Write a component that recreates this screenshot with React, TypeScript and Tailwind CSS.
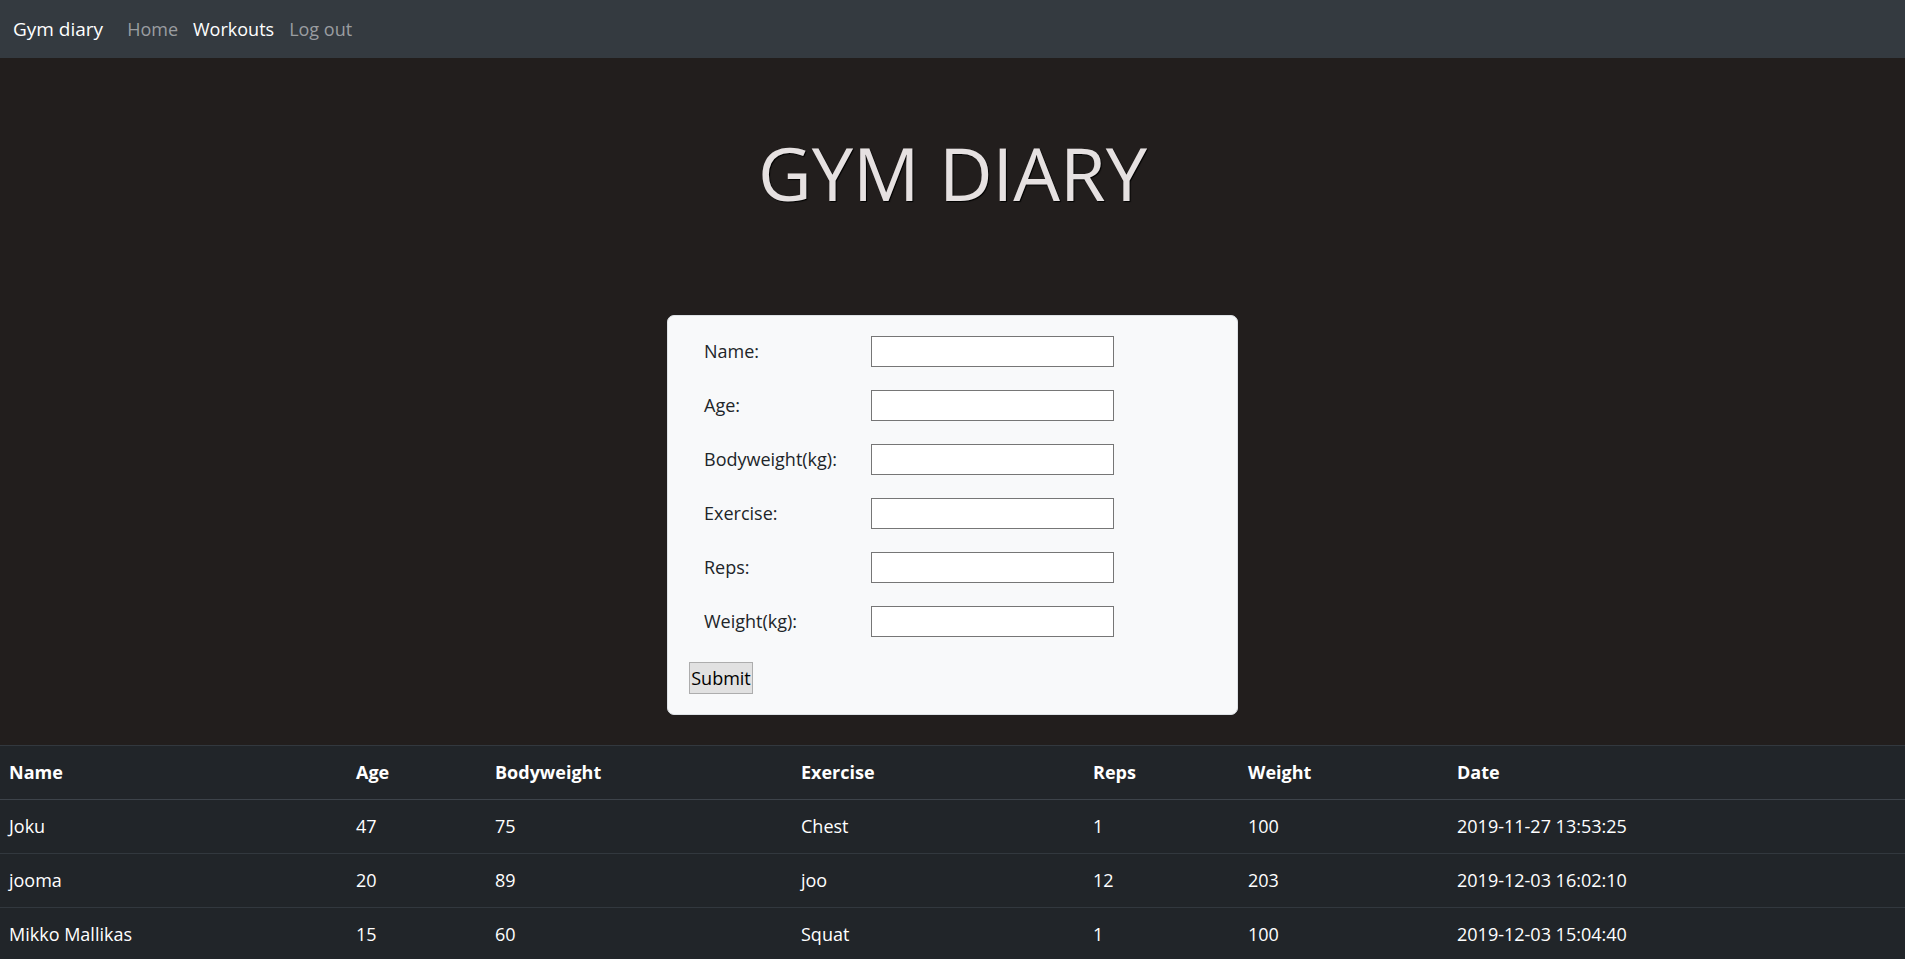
import {useState} from "react";

type Workout = {
    name: string;
    age: number;
    bodyweight: number;
    exercise: string;
    reps: number;
    weight: number;
    date: string;
};

const workouts: Workout[] = [
    {name: "Joku", age: 47, bodyweight: 75, exercise: "Chest", reps: 1, weight: 100, date: "2019-11-27 13:53:25"},
    {name: "jooma", age: 20, bodyweight: 89, exercise: "joo", reps: 12, weight: 203, date: "2019-12-03 16:02:10"},
    {name: "Mikko Mallikas", age: 15, bodyweight: 60, exercise: "Squat", reps: 1, weight: 100, date: "2019-12-03 15:04:40"},
    {name: "Testi", age: 30, bodyweight: 80, exercise: "Deadlift", reps: 5, weight: 140, date: "2019-12-04 10:12:33"},
];

const fields = ["Name:", "Age:", "Bodyweight(kg):", "Exercise:", "Reps:", "Weight(kg):"];

const font = "font-['Open_Sans','Noto_Sans',sans-serif]";

const Navbar = () => (
    <nav className="h-[58px] bg-[#343a40] flex items-center px-[13px]">
        <span className="text-white text-[19px] mr-[24px]">Gym diary</span>
        <a className="text-[#9a9da0] text-[18px] mr-[15px]">Home</a>
        <a className="text-white text-[18px] mr-[15px]">Workouts</a>
        <a className="text-[#9a9da0] text-[18px]">Log out</a>
    </nav>
);

const WorkoutForm = () => {
    const [values, setValues] = useState<string[]>(fields.map(() => ""));

    return (
        <div className="w-[571px] mx-auto bg-[#f8f9fa] border border-[#dee2e6] rounded-[7px] pt-[20px] pb-[20px] px-[21px]">
            <div className="flex flex-col gap-[23px] pl-[15px]">
                {fields.map((label, i) => (
                    <div key={label} className="flex items-center">
                        <label className="w-[167px] text-[18px] text-[#212529]">{label}</label>
                        <input
                            value={values[i]}
                            onChange={e => setValues(v => v.map((x, j) => (j === i ? e.target.value : x)))}
                            className="w-[243px] h-[31px] bg-white border border-[#767676] outline-none px-1"
                        />
                    </div>
                ))}
            </div>
            <button className="mt-[25px] w-[64px] h-[32px] bg-[#e1e1e1] border border-[#adadad] text-[18px] text-black leading-none">
                Submit
            </button>
        </div>
    );
};

const WorkoutTable = () => (
    <table className="w-full mt-[30px] bg-[#212529] text-white text-[18px] border-collapse">
        <thead>
        <tr className="h-[54px] border-t border-[#32383e] border-b border-b-[#3d434a]">
            <th className="w-[347px] pl-[9px] text-left font-bold">Name</th>
            <th className="w-[139px] pl-[9px] text-left font-bold">Age</th>
            <th className="w-[306px] pl-[9px] text-left font-bold">Bodyweight</th>
            <th className="w-[292px] pl-[9px] text-left font-bold">Exercise</th>
            <th className="w-[155px] pl-[9px] text-left font-bold">Reps</th>
            <th className="w-[209px] pl-[9px] text-left font-bold">Weight</th>
            <th className="pl-[9px] text-left font-bold">Date</th>
        </tr>
        </thead>
        <tbody>
        {workouts.map(w => (
            <tr key={w.date} className="h-[54px] border-b border-[#32383e]">
                <td className="pl-[9px]">{w.name}</td>
                <td className="pl-[9px]">{w.age}</td>
                <td className="pl-[9px]">{w.bodyweight}</td>
                <td className="pl-[9px]">{w.exercise}</td>
                <td className="pl-[9px]">{w.reps}</td>
                <td className="pl-[9px]">{w.weight}</td>
                <td className="pl-[9px]">{w.date}</td>
            </tr>
        ))}
        </tbody>
    </table>
);

export default function App() {
    return (
        <div
            className={`${font} h-screen overflow-y-auto bg-[#221e1d] [&::-webkit-scrollbar]:w-[5px] [&::-webkit-scrollbar-track]:bg-[#f1f1f1] [&::-webkit-scrollbar-thumb]:bg-[#c8c8c8]`}
        >
            <Navbar/>
            <h1 className="text-center text-[74px] font-normal leading-none text-[#e6e1e1] pt-[78px] [text-shadow:1px_1px_1px_#000]">
                GYM DIARY
            </h1>
            <div className="mt-[105px]">
                <WorkoutForm/>
            </div>
            <WorkoutTable/>
        </div>
    );
}
